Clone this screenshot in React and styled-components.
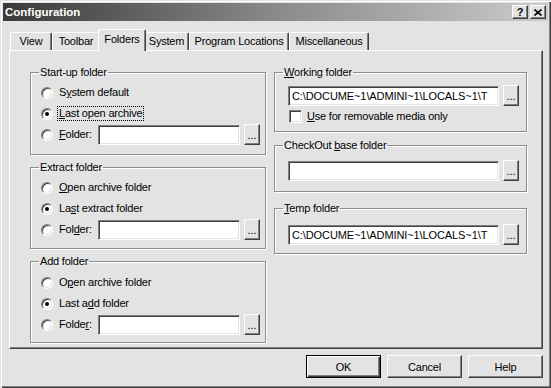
import React from 'react'
import styled, { createGlobalStyle } from 'styled-components'

const Global = createGlobalStyle`
  html, body { margin: 0; padding: 0; background: #e3e3e3; }
  body {
    font-family: "Liberation Sans", Arial, sans-serif;
    font-size: 11px;
    letter-spacing: -0.2px;
    color: #000;
  }
`

const Window = styled.div`
  width: 551px;
  height: 388px;
  box-sizing: border-box;
  padding: 3px;
  background: #e3e3e3;
  display: flex;
  flex-direction: column;
  box-shadow: inset 1px 1px 0 #e3e3e3, inset 2px 2px 0 #fff,
    inset -1px -1px 0 #404040, inset -2px -2px 0 #808080;
`

const TitleBar = styled.div`
  height: 18px;
  display: flex;
  align-items: center;
  padding: 0 2px 0 2px;
  background: linear-gradient(90deg, #3a3a3a 0%, #8a8a8a 50%, #cbcbcb 100%);
`

const Title = styled.div`
  flex: 1;
  color: #fff;
  font-weight: bold;
  font-size: 11.5px;
  letter-spacing: 0;
`

const CapButton = styled.div`
  width: 16px;
  height: 14px;
  box-sizing: border-box;
  margin-left: 2px;
  background: #e3e3e3;
  border: 1px solid;
  border-color: #fff #404040 #404040 #fff;
  box-shadow: inset -1px -1px 0 #808080;
  display: flex;
  align-items: center;
  justify-content: center;
  font-weight: bold;
  font-size: 11px;
  line-height: 1;
`

const Body = styled.div`
  flex: 1;
  display: flex;
  flex-direction: column;
  padding: 8px 5px 0 6px;
`

const TabStrip = styled.div`
  display: flex;
  align-items: flex-end;
  height: 21px;
  padding-left: 1px;
  position: relative;
  z-index: 1;
`

const Tab = styled.div`
  box-sizing: border-box;
  width: ${p => p.$w}px;
  height: ${p => (p.$active ? 22 : 18)}px;
  margin: ${p => (p.$active ? '0 -2px -1px -2px' : '0')};
  padding-top: ${p => (p.$active ? 3 : 2)}px;
  text-align: center;
  background: #e3e3e3;
  border-top: 1px solid #fff;
  border-left: 1px solid #fff;
  border-right: 1px solid #404040;
  border-radius: 2px 2px 0 0;
  box-shadow: inset -1px 0 0 #808080;
  position: relative;
  z-index: ${p => (p.$active ? 2 : 0)};
`

const Panel = styled.div`
  height: 299px;
  box-sizing: border-box;
  border: 1px solid;
  border-color: #fff #404040 #404040 #fff;
  box-shadow: inset -1px -1px 0 #808080;
  display: grid;
  grid-template-columns: 236px 253px;
  column-gap: 8px;
  padding: 15px 0 0 20px;
`

const Column = styled.div`
  display: flex;
  flex-direction: column;
  gap: ${p => p.$gap}px;
`

const Group = styled.fieldset`
  margin: 0;
  padding: 0;
  min-width: 0;
  box-sizing: border-box;
  height: ${p => p.$h}px;
  border: 1px solid #8c8c8c;
  box-shadow: 1px 1px 0 #fff, inset 1px 1px 0 #fff;
`

const Legend = styled.legend`
  margin-left: 8px;
  padding: 0 1px;
  line-height: 13px;
`

const GroupBody = styled.div`
  padding: ${p => p.$pt}px 5px 0 ${p => p.$pl}px;
  display: flex;
  flex-direction: column;
`

const Row = styled.div`
  height: ${p => p.$h || 21}px;
  display: flex;
  align-items: center;
`

const Radio = styled.span`
  flex: none;
  position: relative;
  width: 12px;
  height: 12px;
  box-sizing: border-box;
  border-radius: 50%;
  background: #fff;
  border: 1px solid;
  border-color: #808080 #fff #fff #808080;
  box-shadow: inset 1px 1px 0 #404040, inset -1px -1px 0 #e3e3e3;
  &::after {
    content: '';
    display: ${p => (p.$checked ? 'block' : 'none')};
    position: absolute;
    left: 3px;
    top: 3px;
    width: 4px;
    height: 4px;
    border-radius: 50%;
    background: #000;
  }
`

const Check = styled.span`
  flex: none;
  width: 13px;
  height: 13px;
  box-sizing: border-box;
  background: #fff;
  border: 1px solid;
  border-color: #808080 #fff #fff #808080;
  box-shadow: inset 1px 1px 0 #404040, inset -1px -1px 0 #e3e3e3;
`

const Label = styled.span`
  margin-left: ${p => p.$ml ?? 5}px;
  padding: 0 1px;
  line-height: 13px;
  outline: ${p => (p.$focus ? '1px dotted #000' : 'none')};
  white-space: nowrap;
`

const Field = styled.div`
  box-sizing: border-box;
  width: ${p => p.$w}px;
  height: 20px;
  margin-left: ${p => (p.$flush ? '0' : 'auto')};
  padding: 3px 0 0 3px;
  background: #fff;
  border: 1px solid;
  border-color: #808080 #fff #fff #808080;
  box-shadow: inset 1px 1px 0 #404040, inset -1px -1px 0 #e3e3e3;
  overflow: hidden;
  white-space: nowrap;
  letter-spacing: -0.1px;
`

const Browse = styled.div`
  box-sizing: border-box;
  width: 16px;
  height: 21px;
  margin-left: 4px;
  border: 1px solid;
  border-color: #fff #404040 #404040 #fff;
  box-shadow: inset -1px -1px 0 #808080;
  text-align: center;
  line-height: 21px;
  letter-spacing: 0;
`

const Footer = styled.div`
  display: flex;
  justify-content: flex-end;
  gap: 6px;
  padding: 6px 0 0 0;
`

const Button = styled.div`
  box-sizing: border-box;
  width: 75px;
  height: 23px;
  display: flex;
  align-items: center;
  justify-content: center;
  border: 1px solid;
  border-color: ${p => (p.$default ? '#000' : '#fff #404040 #404040 #fff')};
  box-shadow: ${p =>
    p.$default
      ? 'inset 1px 1px 0 #fff, inset -1px -1px 0 #404040, inset -2px -2px 0 #808080'
      : 'inset -1px -1px 0 #808080'};
`

const U = styled.span`
  text-decoration: underline;
`

const tabs = [
  ['View', 42],
  ['Toolbar', 48],
  ['Folders', 48, true],
  ['System', 45],
  ['Program Locations', 100],
  ['Miscellaneous', 80],
]

const tempPath = 'C:\\DOCUME~1\\ADMINI~1\\LOCALS~1\\T'

function FolderRow({ label }) {
  return (
    <Row>
      <Radio />
      <Label>{label}</Label>
      <Field $w={142} />
      <Browse>...</Browse>
    </Row>
  )
}

function PathRow({ value }) {
  return (
    <Row>
      <Field $w={211} $flush>{value}</Field>
      <Browse>...</Browse>
    </Row>
  )
}

export default function App() {
  return (
    <>
      <Global />
      <Window>
        <TitleBar>
          <Title>Configuration</Title>
          <CapButton>?</CapButton>
          <CapButton>
            <svg width="8" height="7" viewBox="0 0 8 7">
              <path d="M0.5 0.5 L7.5 6.5 M7.5 0.5 L0.5 6.5" stroke="#000" strokeWidth="1.6" />
            </svg>
          </CapButton>
        </TitleBar>
        <Body>
          <TabStrip>
            {tabs.map(([name, w, active]) => (
              <Tab key={name} $w={w} $active={active}>{name}</Tab>
            ))}
          </TabStrip>
          <Panel>
            <Column $gap={6}>
              <Group $h={89}>
                <Legend>Start-up folder</Legend>
                <GroupBody $pt={3} $pl={10}>
                  <Row>
                    <Radio />
                    <Label>S<U>y</U>stem default</Label>
                  </Row>
                  <Row>
                    <Radio $checked />
                    <Label $focus><U>L</U>ast open archive</Label>
                  </Row>
                  <FolderRow label={<><U>F</U>older:</>} />
                </GroupBody>
              </Group>
              <Group $h={88}>
                <Legend>Extract folder</Legend>
                <GroupBody $pt={3} $pl={10}>
                  <Row>
                    <Radio />
                    <Label><U>O</U>pen archive folder</Label>
                  </Row>
                  <Row>
                    <Radio $checked />
                    <Label>La<U>s</U>t extract folder</Label>
                  </Row>
                  <FolderRow label={<>Fol<U>d</U>er:</>} />
                </GroupBody>
              </Group>
              <Group $h={88}>
                <Legend>Add folder</Legend>
                <GroupBody $pt={4} $pl={10}>
                  <Row>
                    <Radio />
                    <Label>O<U>p</U>en archive folder</Label>
                  </Row>
                  <Row>
                    <Radio $checked />
                    <Label>Last a<U>d</U>d folder</Label>
                  </Row>
                  <FolderRow label={<>Folde<U>r</U>:</>} />
                </GroupBody>
              </Group>
            </Column>
            <Column $gap={7}>
              <Group $h={66}>
                <Legend><U>W</U>orking folder</Legend>
                <GroupBody $pt={6} $pl={13}>
                  <PathRow value={tempPath} />
                  <Row $h={21}>
                    <Check style={{ marginLeft: 1 }} />
                    <Label $ml={4}><U>U</U>se for removable media only</Label>
                  </Row>
                </GroupBody>
              </Group>
              <Group $h={53}>
                <Legend>CheckOut <U>b</U>ase folder</Legend>
                <GroupBody $pt={8} $pl={13}>
                  <PathRow value="" />
                </GroupBody>
              </Group>
              <Group $h={52} style={{ marginTop: 3 }}>
                <Legend><U>T</U>emp folder</Legend>
                <GroupBody $pt={9} $pl={13}>
                  <PathRow value={tempPath} />
                </GroupBody>
              </Group>
            </Column>
          </Panel>
          <Footer>
            <Button $default>OK</Button>
            <Button>Cancel</Button>
            <Button>Help</Button>
          </Footer>
        </Body>
      </Window>
    </>
  )
}
